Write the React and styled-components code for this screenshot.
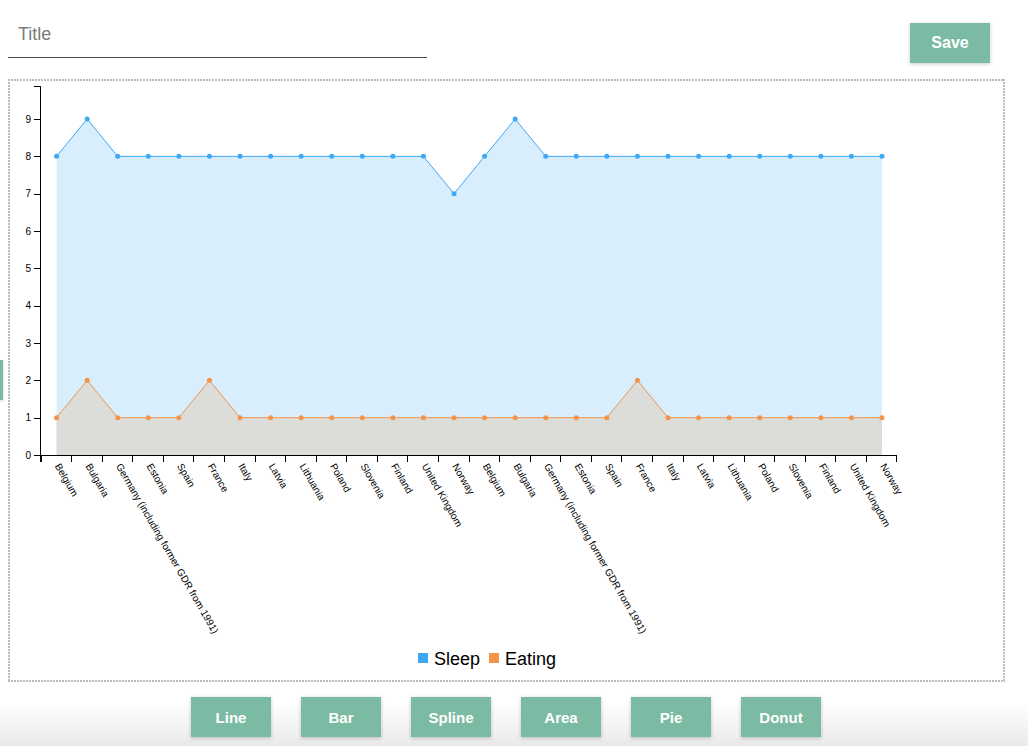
import React from "react";
import styled, { createGlobalStyle } from "styled-components";

const GlobalStyle = createGlobalStyle`
  html, body { margin: 0; padding: 0; background: #fff; }
  body { font-family: "Liberation Sans", Arial, sans-serif; }
  * { box-sizing: border-box; }
`;

const GREEN = "#7bbba4";
const BLUE = "#3ea8f5";
const ORANGE = "#f2954a";

const Page = styled.div`
  min-height: 100vh;
  display: flex;
  flex-direction: column;
`;

const Main = styled.main`
  flex: 1;
  padding: 8px 23px 0 8px;
  display: flex;
  flex-direction: column;
  gap: 16px;
`;

const Header = styled.header`
  display: flex;
  justify-content: space-between;
  align-items: flex-start;
  height: 55px;
`;

const TitleInput = styled.input`
  width: 419px;
  height: 50px;
  border: none;
  border-bottom: 1px solid #4a4a4a;
  padding: 4px 10px 0;
  font-family: "Liberation Sans", Arial, sans-serif;
  font-size: 18px;
  color: #333;
  outline: none;
  background: transparent;
  &::placeholder { color: #7a7a7a; }
`;

const ActionButton = styled.button`
  width: 80px;
  height: 40px;
  border: none;
  background: ${GREEN};
  color: #fff;
  font-family: "Liberation Sans", Arial, sans-serif;
  font-weight: bold;
  font-size: 15px;
  box-shadow: 0 1px 4px rgba(0, 0, 0, 0.22);
  cursor: pointer;
  padding: 0;
`;

const SaveButton = styled(ActionButton)`
  margin-top: 15px;
  margin-right: 15px;
  font-size: 16px;
`;

const dots = (dir) =>
  `repeating-linear-gradient(${dir}, #bdbdbd 0 2px, transparent 2px 3px)`;

const ChartFrame = styled.section`
  height: 603px;
  background:
    ${dots("90deg")} top left / 100% 2px no-repeat,
    ${dots("90deg")} bottom left / 100% 2px no-repeat,
    ${dots("180deg")} top left / 2px 100% no-repeat,
    ${dots("180deg")} top right / 2px 100% no-repeat;
`;

const ChartSvg = styled.svg`
  display: block;
  width: 100%;
  height: 100%;
  font-family: "Liberation Sans", Arial, sans-serif;
`;

const Footer = styled.footer`
  display: flex;
  justify-content: center;
  gap: 30px;
  padding: 15px 24px 9px 8px;
  background: linear-gradient(to bottom, #ffffff 0%, #ffffff 35%, #e9e9e9 100%);
  border-bottom: 1px solid #dedede;
`;

const DrawerHandle = styled.div`
  position: fixed;
  left: 0;
  top: 360px;
  width: 3px;
  height: 40px;
  background: ${GREEN};
  box-shadow: 0 1px 3px rgba(0, 0, 0, 0.2);
`;

const countries = [
  "Belgium",
  "Bulgaria",
  "Germany (including former GDR from 1991)",
  "Estonia",
  "Spain",
  "France",
  "Italy",
  "Latvia",
  "Lithuania",
  "Poland",
  "Slovenia",
  "Finland",
  "United Kingdom",
  "Norway",
];
const cats = [...countries, ...countries];
const sleep = [8, 9, 8, 8, 8, 8, 8, 8, 8, 8, 8, 8, 8, 7, 8, 9, 8, 8, 8, 8, 8, 8, 8, 8, 8, 8, 8, 8];
const eating = [1, 2, 1, 1, 1, 2, 1, 1, 1, 1, 1, 1, 1, 1, 1, 1, 1, 1, 1, 2, 1, 1, 1, 1, 1, 1, 1, 1];

const X0 = 40.5;
const X1 = 896.5;
const BW = (X1 - X0) / cats.length;
const Y0 = 455;
const UNIT = 37.33;
const cx = (i) => X0 + 0.8 + BW * (i + 0.5);
const yv = (v) => Y0 - v * UNIT;

const linePath = (data) => data.map((v, i) => `${i ? "L" : "M"}${cx(i)},${yv(v)}`).join("");
const areaPath = (data) =>
  `${linePath(data)}L${cx(data.length - 1)},${Y0}L${cx(0)},${Y0}Z`;

function Series({ data, color }) {
  return (
    <g>
      <path d={areaPath(data)} fill={color} fillOpacity={0.2} stroke="none" />
      <path d={linePath(data)} fill="none" stroke={color} strokeWidth={1} />
      {data.map((v, i) => (
        <circle key={i} cx={cx(i)} cy={yv(v)} r={2.5} fill={color} />
      ))}
    </g>
  );
}

function Chart() {
  const yTicks = [0, 1, 2, 3, 4, 5, 6, 7, 8, 9];
  return (
    <ChartSvg viewBox="8 79 997 603" preserveAspectRatio="none">
      <Series data={sleep} color={BLUE} />
      <Series data={eating} color={ORANGE} />

      <g stroke="#000" fill="none" shapeRendering="crispEdges">
        <path d={`M34,86.5H40.5V${Y0 + 0.5}`} />
        {yTicks.map((t) => (
          <line key={t} x1={34} x2={40.5} y1={Math.round(yv(t)) + 0.5} y2={Math.round(yv(t)) + 0.5} />
        ))}
      </g>
      <g fontSize="10" fill="#000" textAnchor="end">
        {yTicks.map((t) => (
          <text key={t} x={31} y={yv(t) + 3.5}>
            {t}
          </text>
        ))}
      </g>

      <g stroke="#000" fill="none" shapeRendering="crispEdges">
        <path d={`M${X0},${Y0 + 6.5}V${Y0 + 0.5}H${X1}V${Y0 + 6.5}`} />
        {cats.map((_, k) => (
          <line key={k} x1={Math.round(X0 + BW * k) + 0.5} x2={Math.round(X0 + BW * k) + 0.5} y1={Y0 + 0.5} y2={Y0 + 6.5} />
        ))}
      </g>
      <g fontSize="10" fill="#000">
        {cats.map((c, i) => {
          const x = cx(i) - 2;
          const y = 466;
          return (
            <text key={i} x={x} y={y} transform={`rotate(60 ${x} ${y})`}>
              {c}
            </text>
          );
        })}
      </g>

      <g fontSize="18" fill="#000">
        <rect x={418} y={653} width={10} height={10} fill={BLUE} />
        <text x={434} y={665}>Sleep</text>
        <rect x={489} y={653} width={10} height={10} fill={ORANGE} />
        <text x={505} y={665}>Eating</text>
      </g>
    </ChartSvg>
  );
}

const chartTypes = ["Line", "Bar", "Spline", "Area", "Pie", "Donut"];

export default function App() {
  return (
    <>
      <GlobalStyle />
      <Page>
        <Main>
          <Header>
            <TitleInput placeholder="Title" />
            <SaveButton>Save</SaveButton>
          </Header>
          <ChartFrame>
            <Chart />
          </ChartFrame>
        </Main>
        <Footer>
          {chartTypes.map((t) => (
            <ActionButton key={t}>{t}</ActionButton>
          ))}
        </Footer>
        <DrawerHandle />
      </Page>
    </>
  );
}
